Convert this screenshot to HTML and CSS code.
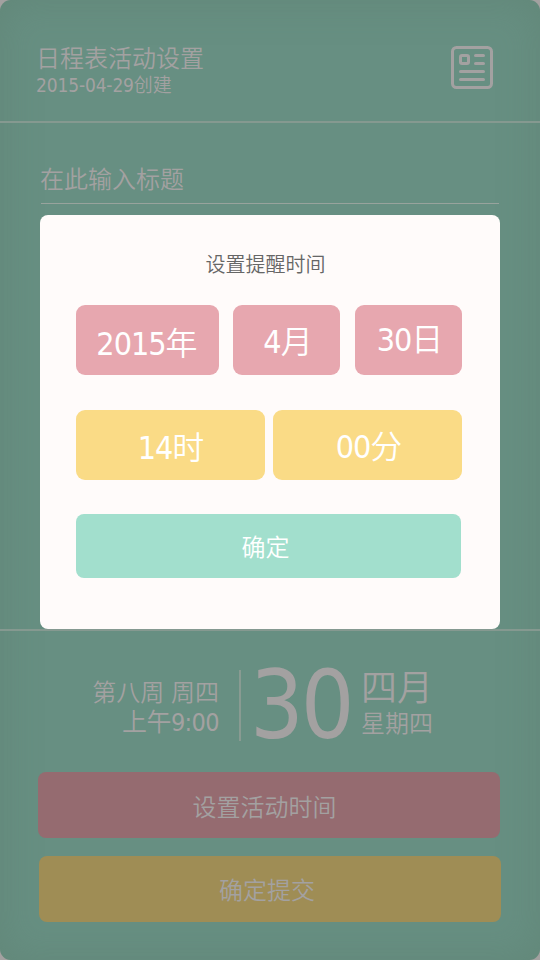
FILE: index.html
```html
<!DOCTYPE html>
<html lang="zh-CN">
<head>
<meta charset="utf-8">
<title>日程表活动设置</title>
<link rel="stylesheet" href="styles.css">
</head>
<body>
<main class="screen">
  <header class="header">
    <div>
      <h1 class="title">日程表活动设置</h1>
      <p class="created">2015-04-29创建</p>
    </div>
    <svg class="list-icon" width="42" height="43" viewBox="0 0 42 43" fill="none" stroke="currentColor" stroke-width="3" stroke-linecap="round">
      <rect x="1.5" y="1.5" width="39" height="40" rx="4"/>
      <rect x="9.5" y="9.5" width="8" height="8" rx="1.5"/>
      <path d="M24.5 9.5H32.5M24.5 17.5H32.5M9.5 25.5H32.5M9.5 33.5H32.5"/>
    </svg>
  </header>
  <section class="editor">
    <div class="field">在此输入标题</div>
  </section>
  <footer class="footer">
    <div class="summary">
      <div class="when">
        <p>第八周 周四</p>
        <p class="clock">上午9:00</p>
      </div>
      <div class="day">30</div>
      <div class="month">
        <p class="month-name">四月</p>
        <p>星期四</p>
      </div>
    </div>
    <div class="action action-time">设置活动时间</div>
    <div class="action action-submit">确定提交</div>
  </footer>
  <section class="dialog">
    <h2 class="dialog-title">设置提醒时间</h2>
    <div class="row dates">
      <div class="pick year">2015年</div>
      <div class="pick mon">4月</div>
      <div class="pick date">30日</div>
    </div>
    <div class="row times">
      <div class="pick hour">14时</div>
      <div class="pick minute">00分</div>
    </div>
    <div class="confirm">确定</div>
  </section>
</main>
</body>
</html>
```
FILE: styles.css
```css
* { box-sizing: border-box; margin: 0; padding: 0; }

body {
  background: #a3a1a0;
  font-family: "DejaVu Sans Condensed", "Noto Sans CJK SC", sans-serif;
  font-weight: 350;
  color: #a3a1a1;
}

.screen {
  position: relative;
  display: flex;
  flex-direction: column;
  width: 540px;
  height: 960px;
  overflow: hidden;
  border-radius: 11px;
  background: #678f82;
  box-shadow: inset 0 0 40px rgba(90, 122, 104, 0.4);
}

.header {
  display: flex;
  justify-content: space-between;
  height: 123px;
  padding: 45px 47px 0 36px;
  border-bottom: 2px solid #859990;
}

.title { font-size: 24px; font-weight: 350; line-height: 29px; }
.created { font-size: 19px; line-height: 22px; letter-spacing: -0.15px; }
.list-icon { margin-top: 1px; }

.editor { height: 506px; padding: 42px 41px 0; }
.field {
  height: 39px;
  font-size: 24px;
  line-height: 30px;
  text-indent: -1px;
  border-bottom: 1px solid #98a39d;
}

.footer { height: 331px; padding-top: 39px; border-top: 2px solid #859990; }
.summary { display: flex; height: 102px; }
.when {
  width: 241px;
  height: 71px;
  padding: 8px 20px 0 0;
  border-right: 2px solid #899b92;
  text-align: right;
  font-size: 24px;
  line-height: 30px;
}
.clock { font-size: 25px; line-height: 30px; letter-spacing: -0.6px; }
.day {
  width: 120px;
  padding-left: 9px;
  font-size: 94px;
  line-height: 71px;
  letter-spacing: -3px;
}
.month { font-size: 24px; line-height: 34px; }
.month-name { font-size: 36px; line-height: 37px; }

.action {
  width: 462px;
  height: 66px;
  border-radius: 8px;
  text-align: center;
  font-size: 24px;
  line-height: 66px;
}
.action-time { margin-left: 38px; padding: 3px 9px 0 0; background: #956b70; }
.action-submit { margin: 18px 0 0 39px; padding: 2px 6px 0 0; background: #9f8d55; }

.dialog {
  position: absolute;
  top: 215px;
  left: 40px;
  width: 460px;
  height: 414px;
  padding: 35px 38px 0 36px;
  border-radius: 8px;
  background: #fffbfa;
  color: #fff;
}
.dialog-title {
  height: 55px;
  padding-right: 7px;
  text-align: center;
  font-size: 20px;
  font-weight: 350;
  line-height: 30px;
  color: #666;
}
.row { display: flex; justify-content: space-between; height: 70px; }
.times { margin-top: 35px; }
.pick {
  border-radius: 9px;
  text-align: center;
  font-size: 32px;
  line-height: 72px;
  letter-spacing: -1px;
}
.dates .pick { background: #e7a7af; }
.times .pick { width: 189px; background: #fadb86; }
.dates .year { width: 143px; padding: 3px 2px 0 0; }
.dates .mon { width: 107px; margin-right: 1px; padding: 1px 0 0 2px; }
.dates .date { width: 107px; padding: 1px 0 0 2px; line-height: 69px; }
.times .hour { padding-top: 2px; }
.times .minute { padding: 1px 0 0 2px; }
.confirm {
  width: 385px;
  height: 64px;
  margin-top: 34px;
  padding: 2px 6px 0 0;
  border-radius: 8px;
  background: #a2dfcd;
  text-align: center;
  font-size: 24px;
  line-height: 64px;
}
```
